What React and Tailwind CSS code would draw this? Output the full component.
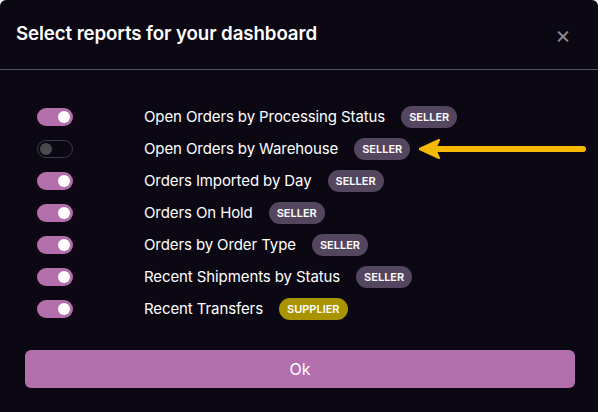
import { useState } from 'react';

const reports = [
  { name: 'Open Orders by Processing Status', role: 'SELLER', on: true },
  { name: 'Open Orders by Warehouse', role: 'SELLER', on: false, arrow: true },
  { name: 'Orders Imported by Day', role: 'SELLER', on: true },
  { name: 'Orders On Hold', role: 'SELLER', on: true },
  { name: 'Orders by Order Type', role: 'SELLER', on: true },
  { name: 'Recent Shipments by Status', role: 'SELLER', on: true },
  { name: 'Recent Transfers', role: 'SUPPLIER', on: true },
];

const Toggle = ({ on, onClick }) => (
  <button
    type="button"
    onClick={onClick}
    className={
      on
        ? 'flex items-center justify-end w-9 h-[18px] rounded-full bg-[#b36fab] px-[3px]'
        : 'flex items-center justify-start w-9 h-[18px] rounded-full border border-[#3c3a42] bg-transparent px-[2px]'
    }
  >
    <span
      className={
        on
          ? 'block w-3 h-3 rounded-full bg-white'
          : 'block w-3 h-3 rounded-full bg-[#4a4a4e]'
      }
    />
  </button>
);

const Arrow = () => (
  <svg className="w-[170px] h-[20px]" viewBox="0 0 170 20" fill="none">
    <path
      d="M164 10 H14"
      stroke="#f7b900"
      strokeWidth="6"
      strokeLinecap="round"
    />
    <path d="M0 10 L20 1 L16 10 L20 19 Z" fill="#f7b900" stroke="#f7b900" strokeWidth="2" strokeLinejoin="round" />
  </svg>
);

export default function App() {
  const [items, setItems] = useState(reports);

  const toggle = (i) =>
    setItems(items.map((r, j) => (j === i ? { ...r, on: !r.on } : r)));

  return (
    <div className="w-[601px] h-[412px] bg-white font-['Inter',sans-serif] overflow-hidden">
      <div className="w-[598px] h-[412px] bg-[#0b0814] rounded-t-[6px] flex flex-col">
        <div className="h-[70px] flex items-center justify-between pl-[16px] pr-[27px] border-b border-[#55535c]">
          <h2 className="text-white text-[18.7px] font-semibold tracking-[-0.1px] pb-[1px]">
            Select reports for your dashboard
          </h2>
          <span className="text-[#8c8a92] text-[24px] leading-none font-normal">×</span>
        </div>
        <div className="flex flex-col pt-[36px] gap-[10px]">
          {items.map((r, i) => (
            <div key={r.name} className="flex items-center h-[22px]">
              <div className="w-[144px] pl-[37px] flex">
                <Toggle on={r.on} onClick={() => toggle(i)} />
              </div>
              <span className="text-white text-[15px] tracking-[-0.1px]">{r.name}</span>
              <span
                className={
                  r.role === 'SUPPLIER'
                    ? 'ml-[16px] h-[22px] px-[8px] rounded-full bg-[#a99400] text-white text-[11px] font-semibold flex items-center'
                    : 'ml-[16px] h-[22px] px-[8px] rounded-full bg-[#55465f] text-white text-[11px] font-semibold flex items-center'
                }
              >
                {r.role}
              </span>
              {r.arrow && (
                <div className="ml-[9px] flex items-center">
                  <Arrow />
                </div>
              )}
            </div>
          ))}
        </div>
        <div className="pl-[25px] pr-[23px] pt-[30px]">
          <button
            type="button"
            className="w-full h-[38px] rounded-[6px] bg-[#b36fab] text-white text-[16px]"
          >
            Ok
          </button>
        </div>
      </div>
    </div>
  );
}
